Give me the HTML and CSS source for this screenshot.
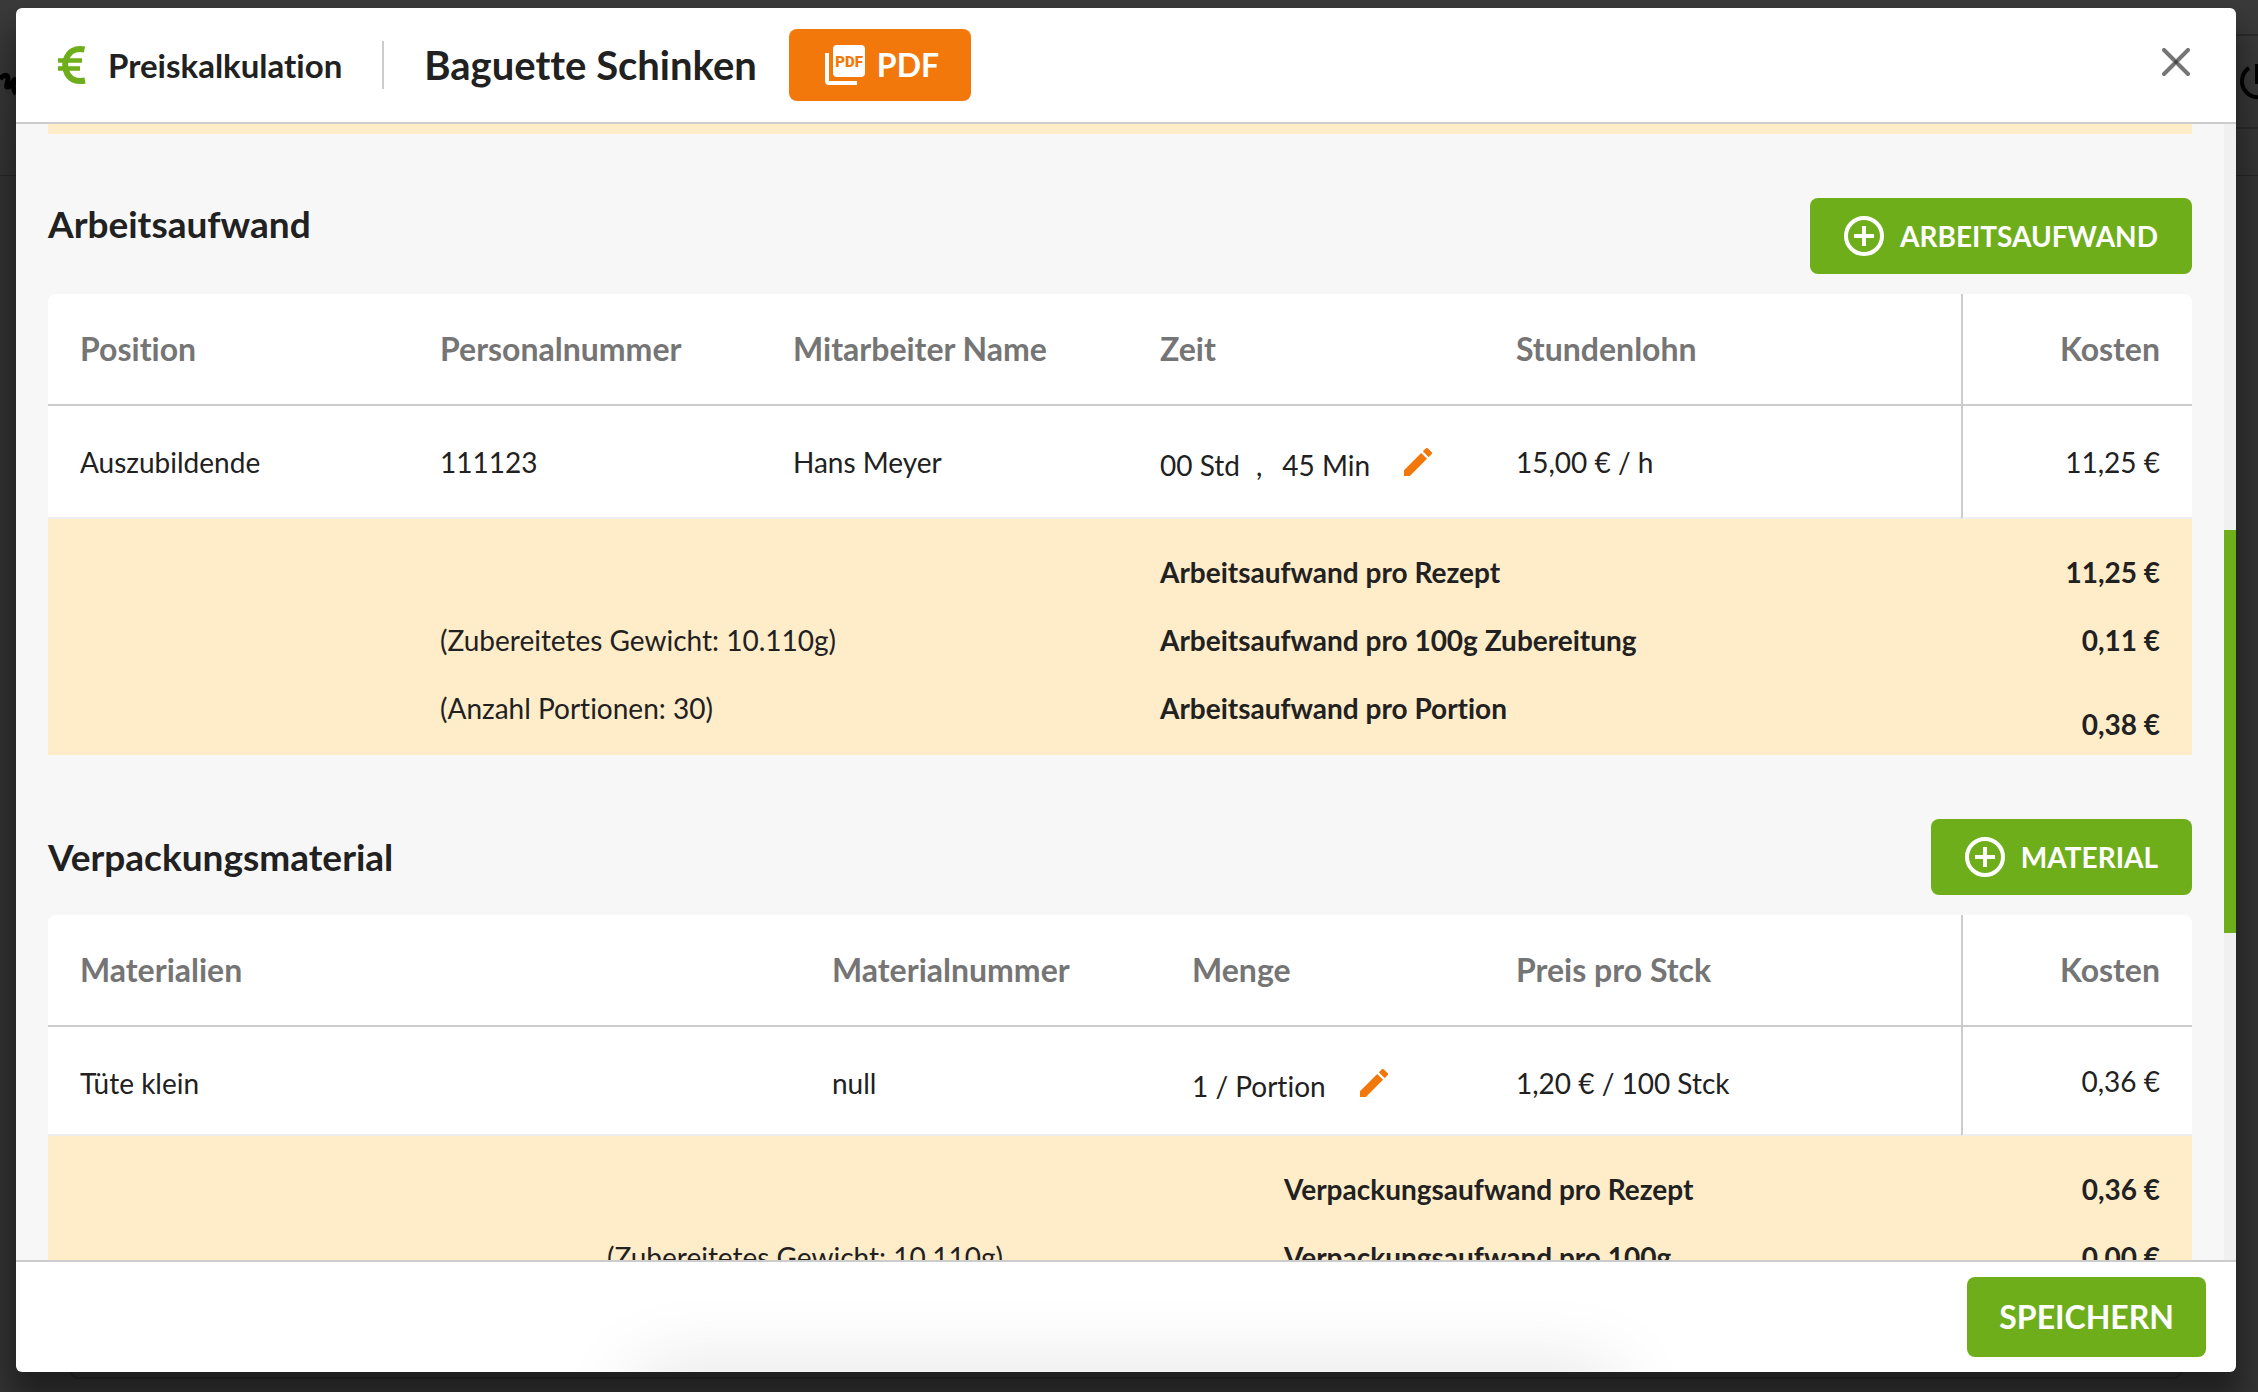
FILE: index.html
```html
<!DOCTYPE html>
<html lang="de">
<head>
<meta charset="utf-8">
<meta name="viewport" content="width=device-width, initial-scale=1">
<title>Preiskalkulation – Baguette Schinken</title>
<link rel="stylesheet" href="styles.css">
</head>
<body>
<div class="page-behind" aria-hidden="true">
  <div class="page-card"></div>
  <div class="page-menu"></div>
  <svg class="brand" viewBox="0 0 16 32"><path d="M0 13C4 8 8 8 8 13c0 4-3 8 0 8s4-6 8-8" fill="none" stroke="#000" stroke-width="5"/><path d="M16 12c-4 6-3 12 0 16" fill="none" stroke="#000" stroke-width="5"/></svg>
  <svg class="power" viewBox="0 0 40 40"><path d="M11 6a16 16 0 1 0 18 0" fill="none" stroke="#000" stroke-width="4"/><path d="M20 2v20" stroke="#000" stroke-width="6"/></svg>
</div>

<div class="dialog" role="dialog" aria-labelledby="dialog-title">
  <header class="dialog-header">
    <svg class="euro-icon" viewBox="0 0 28 38" aria-hidden="true"><g fill="none" stroke="#6fae1b"><path d="M26.500 3.500C17 1.500 10.500 6 8 13.500 7 17 7 21 8 24.500 10.500 32.500 17 36.500 27 34.500" stroke-width="6"/><path d="M0 14.500h24M0 22.500h22" stroke-width="4.500"/></g></svg>
    <span class="module-name">Preiskalkulation</span>
    <h1 class="dialog-title" id="dialog-title">Baguette Schinken</h1>
    <button class="button button-pdf" type="button">
      <svg class="pdf-icon" viewBox="0 0 48 48" aria-hidden="true"><rect x="12" y="4" width="32" height="32" rx="4" fill="#fff"/><path d="M4 12h4v28h28v4H8a4 4 0 0 1-4-4z" fill="#fff"/><text x="28" y="26" text-anchor="middle">PDF</text></svg>
      PDF
    </button>
    <button class="close" type="button" aria-label="Schließen">
      <svg viewBox="0 0 28 28" aria-hidden="true"><path d="M2 2l24 24M26 2L2 26" stroke="#757575" stroke-width="4" stroke-linecap="round"/><circle cx="14" cy="14" r="2" fill="#444"/></svg>
    </button>
  </header>

  <main class="dialog-body">
    <div class="content">
      <div class="previous-summary"></div>

      <section class="section">
        <div class="section-head section-head-top">
          <h2>Arbeitsaufwand</h2>
          <button class="button button-add" type="button">
            <svg viewBox="0 0 40 40" aria-hidden="true"><circle cx="20" cy="20" r="18"/><path d="M20 10v20M10 20h20"/></svg>
            ARBEITSAUFWAND
          </button>
        </div>
        <table class="positions">
          <colgroup><col class="w-360"><col class="w-353"><col class="w-367"><col class="w-356"><col><col class="w-cost"></colgroup>
          <thead>
            <tr><th>Position</th><th>Personalnummer</th><th>Mitarbeiter Name</th><th>Zeit</th><th>Stundenlohn</th><th class="cost">Kosten</th></tr>
          </thead>
          <tbody>
            <tr>
              <td>Auszubildende</td><td>111123</td><td>Hans Meyer</td>
              <td><div class="editable"><span class="time"><span>00 Std</span><span class="comma">,</span><span>45 Min</span></span>
                <button class="edit" type="button" aria-label="Zeit bearbeiten"><svg viewBox="0 0 36 36" aria-hidden="true"><use href="#pencil"/></svg></button></div></td>
              <td>15,00 € / h</td><td class="cost">11,25 €</td>
            </tr>
          </tbody>
        </table>
        <div class="summary">
          <table>
            <colgroup><col class="w-360"><col class="w-720"><col><col class="w-cost"></colgroup>
            <tbody>
              <tr><td></td><td></td><th>Arbeitsaufwand pro Rezept</th><td class="cost">11,25 €</td></tr>
              <tr><td></td><td>(Zubereitetes Gewicht: 10.110g)</td><th>Arbeitsaufwand pro 100g Zubereitung</th><td class="cost">0,11 €</td></tr>
              <tr><td></td><td>(Anzahl Portionen: 30)</td><th>Arbeitsaufwand pro Portion</th><td class="cost cost-last">0,38 €</td></tr>
            </tbody>
          </table>
        </div>
      </section>

      <section class="section">
        <div class="section-head">
          <h2>Verpackungsmaterial</h2>
          <button class="button button-add" type="button">
            <svg viewBox="0 0 40 40" aria-hidden="true"><circle cx="20" cy="20" r="18"/><path d="M20 10v20M10 20h20"/></svg>
            MATERIAL
          </button>
        </div>
        <table class="positions positions-compact">
          <colgroup><col class="w-752"><col class="w-360"><col class="w-324"><col><col class="w-cost"></colgroup>
          <thead>
            <tr><th>Materialien</th><th>Materialnummer</th><th>Menge</th><th>Preis pro Stck</th><th class="cost">Kosten</th></tr>
          </thead>
          <tbody>
            <tr>
              <td>Tüte klein</td><td>null</td>
              <td><div class="editable"><span>1 / Portion</span>
                <button class="edit" type="button" aria-label="Menge bearbeiten"><svg viewBox="0 0 36 36" aria-hidden="true"><use href="#pencil"/></svg></button></div></td>
              <td>1,20 € / 100 Stck</td><td class="cost">0,36 €</td>
            </tr>
          </tbody>
        </table>
        <div class="summary">
          <table>
            <colgroup><col class="w-527"><col class="w-677"><col><col class="w-cost"></colgroup>
            <tbody>
              <tr><td></td><td></td><th>Verpackungsaufwand pro Rezept</th><td class="cost">0,36 €</td></tr>
              <tr><td></td><td>(Zubereitetes Gewicht: 10.110g)</td><th>Verpackungsaufwand pro 100g</th><td class="cost">0,00 €</td></tr>
            </tbody>
          </table>
        </div>
      </section>
    </div>
    <div class="scrollbar" aria-hidden="true"><div class="thumb"></div></div>
  </main>

  <footer class="dialog-footer">
    <button class="button button-save" type="button">SPEICHERN</button>
  </footer>
</div>

<svg class="sprite" aria-hidden="true">
  <symbol id="pencil" viewBox="3 3 18 18"><path d="M3 17.25V21h3.75L17.81 9.94l-3.75-3.75L3 17.25zM20.71 7.04a1 1 0 0 0 0-1.41l-2.34-2.34a1 1 0 0 0-1.41 0l-1.83 1.83 3.75 3.75 1.83-1.83z" fill="#f2780c"/></symbol>
</svg>
</body>
</html>
```
FILE: styles.css
```css
* { box-sizing: border-box; }

body {
  margin: 0;
  height: 100vh;
  padding: 8px 22px 20px 16px;
  display: flex;
  overflow: hidden;
  background: #333;
  color: #212121;
  font-family: Lato, "Liberation Sans", sans-serif;
  font-size: 28px;
  line-height: 36px;
  font-variant-ligatures: none;
}

h1, h2 { margin: 0; font-weight: 700; }
button { font: inherit; font-variant-ligatures: none; color: inherit; border: 0; background: none; padding: 0; cursor: pointer; }
svg { display: block; }
.sprite { position: absolute; width: 0; height: 0; }

/* Dimmed page under the dialog */
.page-behind {
  position: absolute;
  inset: 0;
  background: linear-gradient(#3a3a3a, #333 175px, #262626 175px, #262626 176px, #333 176px);
}
.page-card {
  position: absolute;
  inset: 176px 76px 13px 70px;
  border: 2px solid #282828;
  border-radius: 8px;
}
.page-menu {
  position: absolute;
  top: 34px;
  right: 0;
  width: 80px;
  height: 95px;
  border: solid #2a2a2a;
  border-width: 2px 0;
}
.brand { position: absolute; left: 0; top: 66px; width: 16px; height: 32px; }
.power { position: absolute; right: -20px; top: 62px; width: 40px; height: 40px; }

.dialog {
  position: relative;
  flex: 1;
  min-width: 0;
  display: flex;
  flex-direction: column;
  overflow: hidden;
  background: #fff;
  border-radius: 6px;
  box-shadow: 0 22px 30px 4px rgba(0, 0, 0, .4);
}

.dialog-header {
  flex: none;
  height: 116px;
  padding: 0 46px 0 42px;
  display: flex;
  align-items: center;
  border-bottom: 2px solid #ccc;
}
.euro-icon { width: 28px; height: 38px; margin-right: 22px; }
.module-name {
  padding-right: 40px;
  margin-right: 40px;
  border-right: 2px solid #ccc;
  font-size: 33px;
  font-weight: 700;
  line-height: 48px;
}
.dialog-title { font-size: 40px; line-height: 48px; margin-right: 32px; }

.button {
  display: flex;
  align-items: center;
  justify-content: center;
  border-radius: 8px;
  background: #6fae1b;
  color: #fff;
  font-weight: 700;
}
.button-pdf {
  height: 72px;
  padding: 0 32px;
  gap: 8px;
  background: #f2780c;
  font-size: 32px;
}
.pdf-icon { width: 48px; height: 48px; }
.pdf-icon text { font: 900 15px Roboto, sans-serif; fill: #f2780c; }
.close { margin: 0 0 6px auto; }
.close svg { width: 28px; height: 28px; }

.dialog-body { flex: 1; min-height: 0; display: flex; background: #f7f7f7; }
.content { flex: 1; min-width: 0; padding: 0 32px; overflow: hidden; }
.scrollbar { flex: none; width: 12px; padding-top: 406px; background: #f0f0f0; }
.thumb { height: 403px; background: #6fae1b; }

.previous-summary { height: 10px; background: #ffecc9; }
.section { padding-top: 64px; }
.section-head { display: flex; align-items: center; justify-content: space-between; margin-bottom: 20px; }
.section-head h2 { font-size: 37px; line-height: 44px; }
.section-head-top { align-items: flex-start; }
.section-head-top h2 { padding-top: 4px; }
.button-add { height: 76px; padding: 0 34px; gap: 16px; }
.button-add svg { width: 40px; height: 40px; fill: none; stroke: #fff; stroke-width: 4; }

table { width: 100%; table-layout: fixed; border-collapse: separate; border-spacing: 0; }
th, td { padding: 0 0 0 32px; text-align: left; white-space: nowrap; }
.cost { padding-right: 32px; text-align: right; }
.w-324 { width: 324px; }
.w-353 { width: 353px; }
.w-356 { width: 356px; }
.w-360 { width: 360px; }
.w-367 { width: 367px; }
.w-527 { width: 527px; }
.w-677 { width: 677px; }
.w-720 { width: 720px; }
.w-752 { width: 752px; }
.w-cost { width: 231px; }

.positions { background: #fff; border-radius: 8px 8px 0 0; }
.positions th { height: 112px; border-bottom: 2px solid #ccc; color: #757575; font-size: 32px; }
.positions td { height: 113px; border-bottom: 2px solid #eee; }
.positions-compact td { height: 109px; padding-top: 4px; }
.positions-compact td.cost { padding-top: 0; }
.positions .cost { border-left: 2px solid #ccc; }

.editable { display: flex; align-items: center; gap: 34px; }
.editable > span { padding-top: 6px; }
.time { display: flex; gap: 16px; }
.comma { padding-right: 4px; }
.edit svg { width: 28px; height: 28px; }

.summary { padding: 19px 0 13px; background: #ffecc9; }
.summary td, .summary th { height: 68px; }
.summary th, .summary .cost { font-weight: 700; }
.summary .cost-last { padding-top: 32px; }

.dialog-footer {
  position: relative;
  flex: none;
  height: 112px;
  padding: 0 30px;
  display: flex;
  align-items: center;
  justify-content: flex-end;
  border-top: 2px solid #ccc;
}
/* Soft shade rising from the lower edge */
.dialog-footer::after {
  content: "";
  position: absolute;
  left: 28%;
  right: 28%;
  bottom: -60px;
  height: 60px;
  box-shadow: 0 0 80px rgba(0, 0, 0, .13);
}
.button-save { height: 80px; padding: 0 32px; font-size: 32px; }
```
